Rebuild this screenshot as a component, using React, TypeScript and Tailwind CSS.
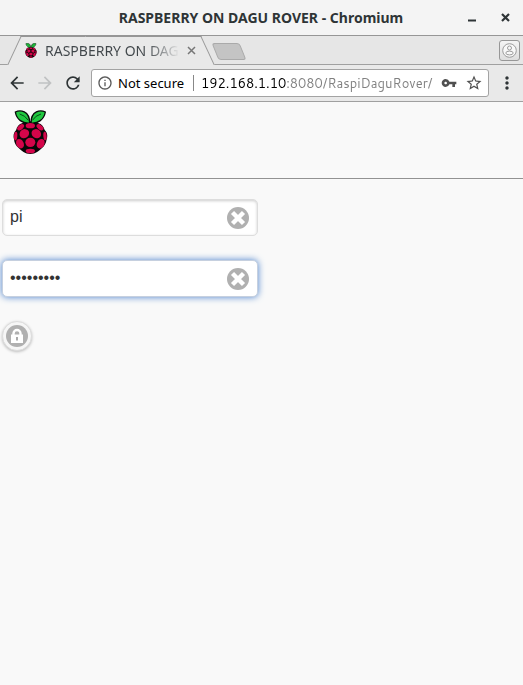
import { useState } from "react";
import { MdArrowBack, MdArrowForward, MdRefresh, MdInfoOutline, MdVpnKey, MdStarBorder, MdMoreVert } from "react-icons/md";

function Raspberry({ className }: { className: string }) {
  return (
    <svg className={className} viewBox="40 28 105 132" aria-hidden="true">
      <path
        d="M92 62C101 62 110 65 117 68C125 70 132 77 135 88C142 94 145 104 141 116C139 129 134 137 127 142C119 150 108 160 92 160C76 160 65 150 57 142C49 136 44 128 43 116C40 106 42 95 49 89C52 77 59 70 67 68C75 64 83 62 92 62Z"
        fill="#080808"
      />
      <path d="M90 67C69 69 51 57 47 34C61 27 90 29 90 67Z" fill="#20c840" stroke="#080808" strokeWidth="4" />
      <path d="M94 67C115 69 133 57 137 34C123 27 94 29 94 67Z" fill="#20c840" stroke="#080808" strokeWidth="4" />
      <path d="M60 40Q76 44 86 59M124 40Q108 44 98 59" stroke="#064d16" strokeWidth="3" fill="none" />
      <g fill="#d4054a">
        <ellipse cx="92" cy="75" rx="14" ry="8" />
        <ellipse cx="63" cy="80" rx="12" ry="7" transform="rotate(-38 63 80)" />
        <ellipse cx="121" cy="80" rx="12" ry="7" transform="rotate(38 121 80)" />
        <ellipse cx="74" cy="99" rx="15" ry="13" transform="rotate(-35 74 99)" />
        <ellipse cx="110" cy="99" rx="15" ry="13" transform="rotate(35 110 99)" />
        <ellipse cx="48" cy="106" rx="5" ry="13" transform="rotate(5 48 106)" />
        <ellipse cx="136" cy="106" rx="5" ry="13" transform="rotate(-5 136 106)" />
        <ellipse cx="92" cy="125" rx="15" ry="14" />
        <ellipse cx="61" cy="129" rx="11" ry="15" transform="rotate(-28 61 129)" />
        <ellipse cx="123" cy="129" rx="11" ry="15" transform="rotate(28 123 129)" />
        <ellipse cx="92" cy="151" rx="14" ry="7" />
      </g>
    </svg>
  );
}

function ClearButton({ label, onClick }: { label: string; onClick: () => void }) {
  return (
    <button type="button" aria-label={label} onClick={onClick} className="shrink-0">
      <svg className="size-[22px]" viewBox="0 0 22 22">
        <circle cx="11" cy="11" r="11" fill="#b0b0b0" />
        <path d="M5.5 5.5L16.5 16.5M16.5 5.5L5.5 16.5" stroke="#fff" strokeWidth="4.4" />
      </svg>
    </button>
  );
}

function TitleBar() {
  return (
    <header className="flex h-9 items-center border-b border-[#969696] bg-[#f4f4f4] text-[#2e3436]">
      <div className="w-[52px]" />
      <h1 className="flex-1 text-center text-[14px] leading-5 font-bold whitespace-nowrap">
        RASPBERRY ON DAGU ROVER - Chromium
      </h1>
      <div className="flex w-[53px] items-center justify-end gap-[25px] pr-[13px]">
        <button type="button" aria-label="Minimize">
          <svg className="size-[9px]" viewBox="0 0 9 9"><path d="M1 7.5H9" stroke="#2e3436" strokeWidth="2" /></svg>
        </button>
        <button type="button" aria-label="Close window">
          <svg className="size-[9px]" viewBox="0 0 9 9"><path d="M1 1L8 8M8 1L1 8" stroke="#2e3436" strokeWidth="2.2" /></svg>
        </button>
      </div>
    </header>
  );
}

function TabStrip() {
  return (
    <div className="flex h-[29px] border-b border-[#a0a0a0] bg-[#e6e6e6]">
      <div className="relative -mb-px ml-[14px] flex h-[29px] w-[194px] shrink-0 items-center">
        <span className="absolute inset-y-0 left-0 w-3/5 -skew-x-[25deg] border-t border-l border-[#969696] bg-[#e9e9e9]" />
        <span className="absolute inset-y-0 right-0 w-3/5 skew-x-[25deg] border-t border-r border-[#969696] bg-[#e9e9e9]" />
        <div className="relative flex w-full items-center pl-[10px] pr-3">
          <Raspberry className="h-[15px] w-[14px]" />
          <span className="ml-[7px] w-[135px] overflow-hidden bg-linear-to-r from-[#40464a] from-75% to-transparent bg-clip-text text-[14px] leading-5 whitespace-nowrap text-transparent">
            RASPBERRY ON DAG
          </span>
          <button type="button" aria-label="Close tab" className="ml-[7px]">
            <svg className="size-[9px]" viewBox="0 0 9 9"><path d="M1 1L8 8M8 1L1 8" stroke="#777" strokeWidth="1.5" /></svg>
          </button>
        </div>
      </div>
      <button type="button" aria-label="New tab" className="mt-[7px] ml-[7px] h-[17px] w-[28px] skew-x-[22deg] rounded-[3px] border border-[#aaa] bg-[#c4c4c4]" />
      <button type="button" aria-label="Profile" className="mt-1 mr-[3px] ml-auto flex size-[21px] items-center justify-center rounded-[3px] border border-[#979797] bg-linear-to-b from-[#f4f4f4] to-[#dedede]">
        <svg className="size-[15px]" viewBox="0 0 15 15" fill="#f8f8f8" stroke="#9b9b9b">
          <circle cx="7.5" cy="7.5" r="6.8" />
          <circle cx="7.5" cy="5" r="2" />
          <ellipse cx="7.5" cy="10" rx="3.7" ry="1.9" />
        </svg>
      </button>
    </div>
  );
}

function Toolbar() {
  return (
    <nav className="flex h-[37px] items-center border-b border-[#a0a0a0] bg-[#e9e9e9] px-[7px] text-[#2e3436]">
      <button type="button" aria-label="Back"><MdArrowBack className="size-5" /></button>
      <button type="button" aria-label="Forward" className="ml-2 text-[#c0c2c3]"><MdArrowForward className="size-5" /></button>
      <button type="button" aria-label="Reload" className="ml-2"><MdRefresh className="size-5" /></button>
      <div className="ml-2 flex h-7 min-w-0 flex-1 items-center rounded-[3px] border border-[#a3a3a3] bg-white px-[5px] text-[13px] leading-5">
        <MdInfoOutline className="size-4 shrink-0 text-[#5a5a5a]" />
        <span className="ml-[5px] shrink-0 text-black">Not secure</span>
        <span className="ml-[9px] h-4 w-px shrink-0 bg-[#888]" />
        <input
          aria-label="Address"
          defaultValue="192.168.1.10:8080/RaspiDaguRover/"
          className="ml-[7px] h-5 min-w-0 flex-1 bg-linear-to-r from-black from-[86px] to-[#808080] to-[86px] bg-clip-text font-['Cantarell','Noto_Sans',sans-serif] text-transparent outline-none"
        />
        <button type="button" aria-label="Saved passwords" className="ml-1"><MdVpnKey className="size-4 text-[#505050]" /></button>
        <button type="button" aria-label="Bookmark" className="ml-2"><MdStarBorder className="size-[18px] text-[#505050]" /></button>
      </div>
      <button type="button" aria-label="Menu" className="ml-2 -mr-px"><MdMoreVert className="size-5" /></button>
    </nav>
  );
}

export default function App() {
  const [user, setUser] = useState("pi");
  const [password, setPassword] = useState("raspberry");

  return (
    <div className="flex min-h-screen flex-col bg-[#f9f9f9] font-['Noto_Sans',sans-serif]">
      <TitleBar />
      <TabStrip />
      <Toolbar />
      <div className="border-b border-[#929292] px-[13px] pt-2 pb-6">
        <Raspberry className="h-11 w-[35px]" />
      </div>
      <form
        className="flex flex-col items-start gap-6 px-[2px] pt-5 font-['Liberation_Sans',Arial,sans-serif]"
        onSubmit={(event) => event.preventDefault()}
      >
        <div className="flex h-[37px] w-64 items-center rounded-[5px] border border-[#ddd] bg-white pr-2 pl-[7px] shadow-[inset_0_1px_3px_rgba(0,0,0,0.2)]">
          <input aria-label="User name" value={user} onChange={(e) => setUser(e.target.value)} className="mb-0.5 h-5 min-w-0 flex-1 text-[16px] leading-5 text-[#333] outline-none" />
          <ClearButton label="Clear user name" onClick={() => setUser("")} />
        </div>
        <div className="flex h-[37px] w-64 items-center rounded-[5px] border border-[#c6d0df] bg-white pr-2 pl-[7px] shadow-[0_0_7px_#4a80cc]">
          <input aria-label="Password" type="password" value={password} onChange={(e) => setPassword(e.target.value)} className="mb-0.5 h-5 min-w-0 flex-1 text-[16px] leading-5 text-[#333] outline-none" />
          <ClearButton label="Clear password" onClick={() => setPassword("")} />
        </div>
        <button type="submit" aria-label="Log in" className="flex size-[30px] items-center justify-center rounded-full border border-[#ddd] bg-[#f6f6f6] shadow-[0_1px_3px_rgba(0,0,0,0.25)]">
          <svg className="size-[22px]" viewBox="0 0 22 22">
            <circle cx="11" cy="11" r="11" fill="#b0b0b0" />
            <path d="M7.5 10V8.5a3.5 3.5 0 0 1 7 0V10" fill="none" stroke="#fff" strokeWidth="2.4" />
            <path d="M5 9.5h12v8.5H5z" fill="#fff" />
            <path d="M11 12v3.5" stroke="#aaa" strokeWidth="2" />
          </svg>
        </button>
      </form>
    </div>
  );
}
